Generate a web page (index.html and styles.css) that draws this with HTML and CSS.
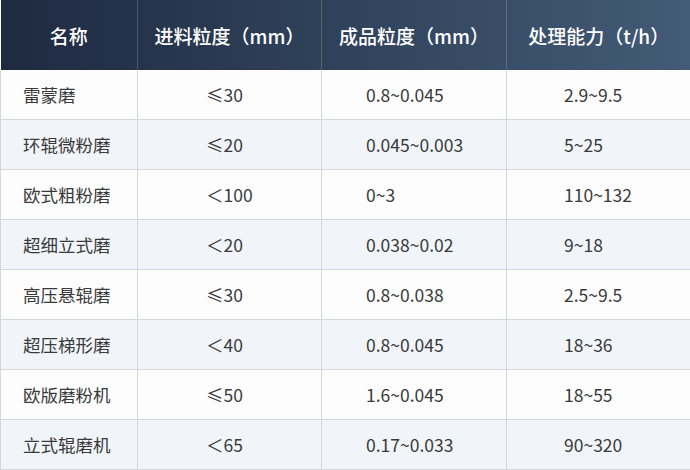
FILE: index.html
```html
<!DOCTYPE html>
<html lang="zh">
<head>
<meta charset="utf-8">
<link rel="stylesheet" href="styles.css">
</head>
<body>
<table class="spec">
  <colgroup>
    <col class="c1"><col class="c2"><col class="c3"><col class="c4">
  </colgroup>
  <thead>
    <tr>
      <th>名称</th>
      <th>进料粒度（mm）</th>
      <th>成品粒度（mm）</th>
      <th>处理能力（t/h）</th>
    </tr>
  </thead>
  <tbody>
    <tr><td>雷蒙磨</td><td>≤30</td><td>0.8~0.045</td><td>2.9~9.5</td></tr>
    <tr><td>环辊微粉磨</td><td>≤20</td><td>0.045~0.003</td><td>5~25</td></tr>
    <tr><td>欧式粗粉磨</td><td>＜100</td><td>0~3</td><td>110~132</td></tr>
    <tr><td>超细立式磨</td><td>＜20</td><td>0.038~0.02</td><td>9~18</td></tr>
    <tr><td>高压悬辊磨</td><td>≤30</td><td>0.8~0.038</td><td>2.5~9.5</td></tr>
    <tr><td>超压梯形磨</td><td>＜40</td><td>0.8~0.045</td><td>18~36</td></tr>
    <tr><td>欧版磨粉机</td><td>≤50</td><td>1.6~0.045</td><td>18~55</td></tr>
    <tr><td>立式辊磨机</td><td>＜65</td><td>0.17~0.033</td><td>90~320</td></tr>
  </tbody>
</table>
</body>
</html>
```
FILE: styles.css
```css
html, body {
  margin: 0;
  padding: 0;
  background: #ffffff;
}
body {
  font-family: "Noto Sans CJK SC", "Noto Sans", sans-serif;
}
.spec {
  width: 690px;
  border-collapse: collapse;
  table-layout: fixed;
}
.c1 { width: 137px; }
.c2 { width: 184px; }
.c3 { width: 185px; }
.c4 { width: 184px; }
.spec thead tr {
  background: linear-gradient(90deg, #1e2a40 0%, #2f4059 45%, #435b76 100%);
}
.spec th {
  height: 70px;
  padding: 0;
  color: #ffffff;
  font-size: 19px;
  font-weight: 500;
  text-align: center;
  border-left: 1px solid rgba(255, 255, 255, 0.18);
}
.spec th:first-child {
  border-left: none;
}
.spec td {
  height: 49px;
  padding: 0;
  font-size: 17.5px;
  color: #3a3a3a;
  border: 1px solid #d3d7dc;
  border-top: none;
}
.spec tbody tr:nth-child(odd) td { background: #fdfdfe; }
.spec tbody tr:nth-child(even) td { background: #f1f5f9; }
.spec td:nth-child(1) { padding-left: 22px; }
.spec td:nth-child(2) { padding-left: 68px; }
.spec td:nth-child(3) { padding-left: 44px; }
.spec td:nth-child(4) { padding-left: 57px; }
```
